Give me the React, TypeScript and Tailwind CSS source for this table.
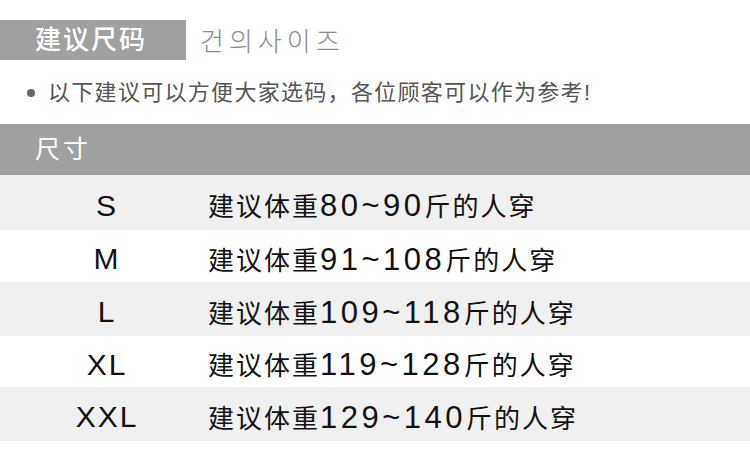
import React from 'react';

const sizes = [
  { size: 'S', range: '80~90', h: 'h-[55px]', shade: true },
  { size: 'M', range: '91~108', h: 'h-[52px]', shade: false },
  { size: 'L', range: '109~118', h: 'h-[54px]', shade: true },
  { size: 'XL', range: '119~128', h: 'h-[51px]', shade: false },
  { size: 'XXL', range: '129~140', h: 'h-[54px]', shade: true },
];

const font = "font-['Liberation_Sans','Noto_Sans_CJK_SC',sans-serif]";

export default function App() {
  return (
    <div className={`w-[750px] h-[463px] bg-white overflow-hidden pt-5 ${font}`}>
      {/* Title */}
      <div className="flex items-center h-10">
        <div className="w-[186px] h-10 bg-[#a0a0a0] flex items-center pl-[35px]">
          <span className="text-white text-[26px] leading-none tracking-[2px] font-medium">建议尺码</span>
        </div>
        <span className="ml-[14px] text-[#8a8a8a] text-[26px] leading-none tracking-[5px] font-light font-['Noto_Sans_CJK_KR',sans-serif]">
          건의사이즈
        </span>
      </div>

      {/* Note */}
      <div className="flex items-center h-[30px] mt-[18px] pl-[27px] text-[#555]">
        <span className="w-[8px] h-[8px] rounded-full bg-[#666] mr-[13px]" />
        <span className="text-[22px] leading-none tracking-[1.3px]">以下建议可以方便大家选码，各位顾客可以作为参考!</span>
      </div>

      {/* Table */}
      <div className="mt-[16px]">
        <div className="h-[51px] bg-[#a0a0a0] flex items-center pl-[35px]">
          <span className="text-white text-[25px] leading-none tracking-[3px]">尺寸</span>
        </div>
        {sizes.map((r) => (
          <div
            key={r.size}
            className={`${r.h} flex items-center pt-[6px] text-[#111] ${r.shade ? 'bg-[#f0f0f0]' : 'bg-white'}`}
          >
            <span className="w-[200px] pl-[14px] text-center text-[30px] leading-none tracking-[2px]">{r.size}</span>
            <span className="pl-2 flex items-baseline leading-none">
              <span className="text-[26px] tracking-[2px]">建议体重</span>
              <span className="text-[31px] tracking-[3.5px]">{r.range}</span>
              <span className="text-[26px] tracking-[2px]">斤的人穿</span>
            </span>
          </div>
        ))}
      </div>
    </div>
  );
}
